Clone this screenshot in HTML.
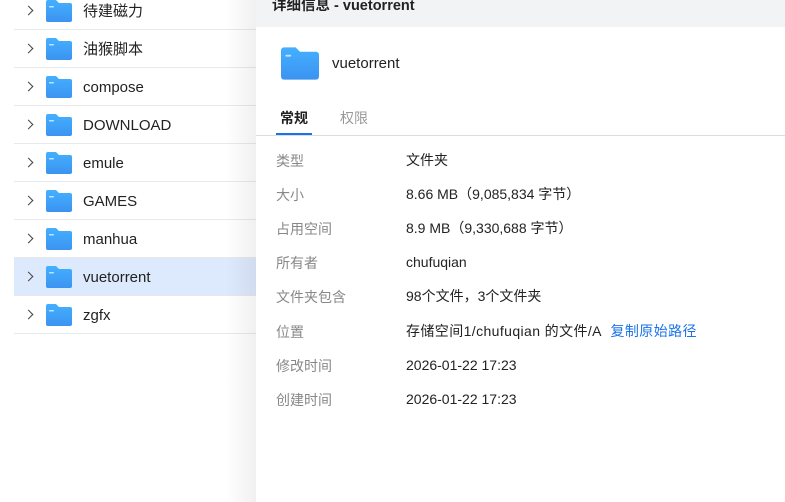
<!DOCTYPE html><html><head><meta charset="utf-8"><style>
*{margin:0;padding:0;box-sizing:border-box}
body{width:785px;height:502px;overflow:hidden;background:#fff;font-family:"Liberation Sans","Noto Sans CJK SC",sans-serif;position:relative;color:#222}
.row{position:absolute;left:14px;width:250px;height:38px;border-bottom:1px solid #e8e9eb;font-size:15px}
.row .ch{position:absolute;left:11px;top:15px;width:7px;height:7px;border-right:1.4px solid #444;border-top:1.4px solid #444;transform:rotate(45deg)}
.fold{position:absolute;width:26px;height:22px}
.row .fold{left:32px;top:8px}
.row span{position:absolute;left:69px;top:11px;line-height:18px}
.sel{background:#dde9fd}
.shadow{position:absolute;left:226px;top:0;width:30px;height:502px;background:linear-gradient(to right,rgba(0,0,0,0),rgba(0,0,0,0.06))}
.panel{position:absolute;left:256px;top:0;width:529px;height:502px;background:#fff}
.hd{height:27px;background:#f2f3f5;font-weight:bold;font-size:14.5px;padding-left:16px;line-height:12px}
.lbl{position:absolute;left:20px;font-size:14px;color:#888;line-height:18px}
.val{position:absolute;left:150px;font-size:14px;color:#222;line-height:18px}
</style></head><body>
<svg width="0" height="0" style="position:absolute"><defs><linearGradient id="g" x1="0" y1="0" x2="0" y2="1"><stop offset="0" stop-color="#44b0ff"/><stop offset="1" stop-color="#3b93f0"/></linearGradient></defs></svg>
<div class="row" style="top:-8px"><div class="ch"></div><svg class="fold" viewBox="0 0 26 22"><path d="M2 0h8l3 3h11a2 2 0 0 1 2 2v15a2 2 0 0 1-2 2H2a2 2 0 0 1-2-2V2a2 2 0 0 1 2-2z" fill="url(#g)"/><rect x="3" y="6" width="5" height="1.5" rx=".7" fill="#bfe3ff"/></svg><span>待建磁力</span></div>
<div class="row" style="top:30px"><div class="ch"></div><svg class="fold" viewBox="0 0 26 22"><path d="M2 0h8l3 3h11a2 2 0 0 1 2 2v15a2 2 0 0 1-2 2H2a2 2 0 0 1-2-2V2a2 2 0 0 1 2-2z" fill="url(#g)"/><rect x="3" y="6" width="5" height="1.5" rx=".7" fill="#bfe3ff"/></svg><span>油猴脚本</span></div>
<div class="row" style="top:68px"><div class="ch"></div><svg class="fold" viewBox="0 0 26 22"><path d="M2 0h8l3 3h11a2 2 0 0 1 2 2v15a2 2 0 0 1-2 2H2a2 2 0 0 1-2-2V2a2 2 0 0 1 2-2z" fill="url(#g)"/><rect x="3" y="6" width="5" height="1.5" rx=".7" fill="#bfe3ff"/></svg><span>compose</span></div>
<div class="row" style="top:106px"><div class="ch"></div><svg class="fold" viewBox="0 0 26 22"><path d="M2 0h8l3 3h11a2 2 0 0 1 2 2v15a2 2 0 0 1-2 2H2a2 2 0 0 1-2-2V2a2 2 0 0 1 2-2z" fill="url(#g)"/><rect x="3" y="6" width="5" height="1.5" rx=".7" fill="#bfe3ff"/></svg><span>DOWNLOAD</span></div>
<div class="row" style="top:144px"><div class="ch"></div><svg class="fold" viewBox="0 0 26 22"><path d="M2 0h8l3 3h11a2 2 0 0 1 2 2v15a2 2 0 0 1-2 2H2a2 2 0 0 1-2-2V2a2 2 0 0 1 2-2z" fill="url(#g)"/><rect x="3" y="6" width="5" height="1.5" rx=".7" fill="#bfe3ff"/></svg><span>emule</span></div>
<div class="row" style="top:182px"><div class="ch"></div><svg class="fold" viewBox="0 0 26 22"><path d="M2 0h8l3 3h11a2 2 0 0 1 2 2v15a2 2 0 0 1-2 2H2a2 2 0 0 1-2-2V2a2 2 0 0 1 2-2z" fill="url(#g)"/><rect x="3" y="6" width="5" height="1.5" rx=".7" fill="#bfe3ff"/></svg><span>GAMES</span></div>
<div class="row" style="top:220px"><div class="ch"></div><svg class="fold" viewBox="0 0 26 22"><path d="M2 0h8l3 3h11a2 2 0 0 1 2 2v15a2 2 0 0 1-2 2H2a2 2 0 0 1-2-2V2a2 2 0 0 1 2-2z" fill="url(#g)"/><rect x="3" y="6" width="5" height="1.5" rx=".7" fill="#bfe3ff"/></svg><span>manhua</span></div>
<div class="row sel" style="top:258px"><div class="ch"></div><svg class="fold" viewBox="0 0 26 22"><path d="M2 0h8l3 3h11a2 2 0 0 1 2 2v15a2 2 0 0 1-2 2H2a2 2 0 0 1-2-2V2a2 2 0 0 1 2-2z" fill="url(#g)"/><rect x="3" y="6" width="5" height="1.5" rx=".7" fill="#bfe3ff"/></svg><span>vuetorrent</span></div>
<div class="row" style="top:296px"><div class="ch"></div><svg class="fold" viewBox="0 0 26 22"><path d="M2 0h8l3 3h11a2 2 0 0 1 2 2v15a2 2 0 0 1-2 2H2a2 2 0 0 1-2-2V2a2 2 0 0 1 2-2z" fill="url(#g)"/><rect x="3" y="6" width="5" height="1.5" rx=".7" fill="#bfe3ff"/></svg><span>zgfx</span></div>
<div class="shadow"></div>
<div class="panel">
<div class="hd">详细信息 - vuetorrent</div>
<svg class="fold" style="left:25px;top:46px;width:38px;height:35px" viewBox="0 0 26 22"><path d="M2 0h8l3 3h11a2 2 0 0 1 2 2v15a2 2 0 0 1-2 2H2a2 2 0 0 1-2-2V2a2 2 0 0 1 2-2z" fill="url(#g)"/><rect x="3" y="5" width="4" height="1.3" rx=".6" fill="#bfe3ff"/></svg>
<div style="position:absolute;left:76px;top:55px;font-size:15px;line-height:18px">vuetorrent</div>
<div style="position:absolute;left:24px;top:109px;font-size:14px;font-weight:bold;line-height:18px">常规</div>
<div style="position:absolute;left:20px;top:133px;width:36px;height:3px;background:#1a73e8"></div>
<div style="position:absolute;left:84px;top:109px;font-size:14px;color:#999;line-height:18px">权限</div>
<div style="position:absolute;left:0;top:135px;width:529px;height:1px;background:#dcdde0"></div>
<div class="lbl" style="top:152px">类型</div><div class="val" style="top:151px">文件夹</div>
<div class="lbl" style="top:186px">大小</div><div class="val" style="top:185px">8.66 MB（9,085,834 字节）</div>
<div class="lbl" style="top:220px">占用空间</div><div class="val" style="top:219px">8.9 MB（9,330,688 字节）</div>
<div class="lbl" style="top:254px">所有者</div><div class="val" style="top:253px">chufuqian</div>
<div class="lbl" style="top:288px">文件夹包含</div><div class="val" style="top:287px">98个文件，3个文件夹</div>
<div class="lbl" style="top:323px">位置</div><div class="val" style="top:322px;letter-spacing:0.4px">存储空间1/chufuqian 的文件/A&nbsp;&nbsp;<span style="color:#1a73e8">复制原始路径</span></div>
<div class="lbl" style="top:357px">修改时间</div><div class="val" style="top:356px">2026-01-22 17:23</div>
<div class="lbl" style="top:391px">创建时间</div><div class="val" style="top:390px">2026-01-22 17:23</div>
</div>
</body></html>
